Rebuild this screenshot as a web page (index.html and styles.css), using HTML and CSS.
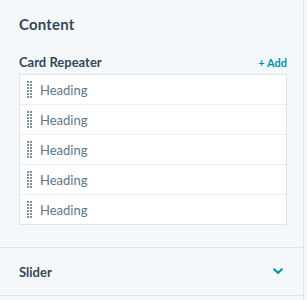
FILE: index.html
```html
<!DOCTYPE html>
<html lang="en">
<head>
    <meta charset="UTF-8">
    <meta name="viewport" content="width=device-width, initial-scale=1.0">
    <title>Content</title>
    <link rel="stylesheet" href="styles.css">
</head>
<body>
    <div class="panel">
        <div class="content-section">
            <h2 class="section-title">Content</h2>
            <div class="repeater-head">
                <span class="repeater-label">Card Repeater</span>
                <span class="add-link">+ Add</span>
            </div>
            <div class="repeater-list">
                <div class="repeater-item">
                    <svg class="drag-handle" width="5" height="17" viewBox="0 0 5 17"><g fill="#425b76"><circle cx="1" cy="1" r="0.9"/><circle cx="4" cy="1" r="0.9"/><circle cx="1" cy="4" r="0.9"/><circle cx="4" cy="4" r="0.9"/><circle cx="1" cy="7" r="0.9"/><circle cx="4" cy="7" r="0.9"/><circle cx="1" cy="10" r="0.9"/><circle cx="4" cy="10" r="0.9"/><circle cx="1" cy="13" r="0.9"/><circle cx="4" cy="13" r="0.9"/><circle cx="1" cy="16" r="0.9"/><circle cx="4" cy="16" r="0.9"/></g></svg>
                    <span>Heading</span>
                </div>
                <div class="repeater-item">
                    <svg class="drag-handle" width="5" height="17" viewBox="0 0 5 17"><g fill="#425b76"><circle cx="1" cy="1" r="0.9"/><circle cx="4" cy="1" r="0.9"/><circle cx="1" cy="4" r="0.9"/><circle cx="4" cy="4" r="0.9"/><circle cx="1" cy="7" r="0.9"/><circle cx="4" cy="7" r="0.9"/><circle cx="1" cy="10" r="0.9"/><circle cx="4" cy="10" r="0.9"/><circle cx="1" cy="13" r="0.9"/><circle cx="4" cy="13" r="0.9"/><circle cx="1" cy="16" r="0.9"/><circle cx="4" cy="16" r="0.9"/></g></svg>
                    <span>Heading</span>
                </div>
                <div class="repeater-item">
                    <svg class="drag-handle" width="5" height="17" viewBox="0 0 5 17"><g fill="#425b76"><circle cx="1" cy="1" r="0.9"/><circle cx="4" cy="1" r="0.9"/><circle cx="1" cy="4" r="0.9"/><circle cx="4" cy="4" r="0.9"/><circle cx="1" cy="7" r="0.9"/><circle cx="4" cy="7" r="0.9"/><circle cx="1" cy="10" r="0.9"/><circle cx="4" cy="10" r="0.9"/><circle cx="1" cy="13" r="0.9"/><circle cx="4" cy="13" r="0.9"/><circle cx="1" cy="16" r="0.9"/><circle cx="4" cy="16" r="0.9"/></g></svg>
                    <span>Heading</span>
                </div>
                <div class="repeater-item">
                    <svg class="drag-handle" width="5" height="17" viewBox="0 0 5 17"><g fill="#425b76"><circle cx="1" cy="1" r="0.9"/><circle cx="4" cy="1" r="0.9"/><circle cx="1" cy="4" r="0.9"/><circle cx="4" cy="4" r="0.9"/><circle cx="1" cy="7" r="0.9"/><circle cx="4" cy="7" r="0.9"/><circle cx="1" cy="10" r="0.9"/><circle cx="4" cy="10" r="0.9"/><circle cx="1" cy="13" r="0.9"/><circle cx="4" cy="13" r="0.9"/><circle cx="1" cy="16" r="0.9"/><circle cx="4" cy="16" r="0.9"/></g></svg>
                    <span>Heading</span>
                </div>
                <div class="repeater-item">
                    <svg class="drag-handle" width="5" height="17" viewBox="0 0 5 17"><g fill="#425b76"><circle cx="1" cy="1" r="0.9"/><circle cx="4" cy="1" r="0.9"/><circle cx="1" cy="4" r="0.9"/><circle cx="4" cy="4" r="0.9"/><circle cx="1" cy="7" r="0.9"/><circle cx="4" cy="7" r="0.9"/><circle cx="1" cy="10" r="0.9"/><circle cx="4" cy="10" r="0.9"/><circle cx="1" cy="13" r="0.9"/><circle cx="4" cy="13" r="0.9"/><circle cx="1" cy="16" r="0.9"/><circle cx="4" cy="16" r="0.9"/></g></svg>
                    <span>Heading</span>
                </div>
            </div>
        </div>
        <div class="collapse-section">
            <span class="collapse-title">Slider</span>
            <svg class="chevron" width="10" height="7" viewBox="0 0 10 7"><path d="M1.2 1.2 L5 5 L8.8 1.2" fill="none" stroke="#0091ae" stroke-width="2" stroke-linecap="round" stroke-linejoin="round"/></svg>
        </div>
    </div>
</body>
</html>
```

FILE: styles.css
```css
body {
    margin: 0;
    background-color: #f5f8fa;
    font-family: Lato, "Noto Sans", sans-serif;
    color: #33475b;
}

.panel {
    width: 303px;
    height: 300px;
    border-right: 1px solid #dfe3eb;
    background-color: #f5f8fa;
}

.content-section {
    padding: 14px 16px 22px 19px;
    border-bottom: 1px solid #dfe3eb;
}

.section-title {
    margin: 0;
    font-size: 15px;
    line-height: 20px;
    font-weight: 700;
    letter-spacing: 0.2px;
}

.repeater-head {
    display: flex;
    justify-content: space-between;
    align-items: center;
    height: 20px;
    margin-top: 18px;
    margin-bottom: 2px;
}

.repeater-label {
    font-size: 13px;
    font-weight: 700;
}

.add-link {
    font-size: 11px;
    font-weight: 700;
    color: #0091ae;
}

.repeater-list {
    background-color: #fff;
    border: 1px solid #dfe3eb;
}

.repeater-item {
    display: flex;
    align-items: center;
    gap: 8px;
    height: 29px;
    padding-left: 7px;
    border-bottom: 1px solid #eaf0f6;
    font-size: 13px;
    color: #5c7591;
}

.repeater-item:last-child {
    border-bottom: none;
}

.drag-handle {
    flex-shrink: 0;
}

.collapse-section {
    display: flex;
    justify-content: space-between;
    align-items: center;
    height: 47px;
    padding: 0 20px 0 19px;
    border-bottom: 1px solid #dfe3eb;
}

.collapse-title {
    font-size: 13px;
    font-weight: 700;
}
```
